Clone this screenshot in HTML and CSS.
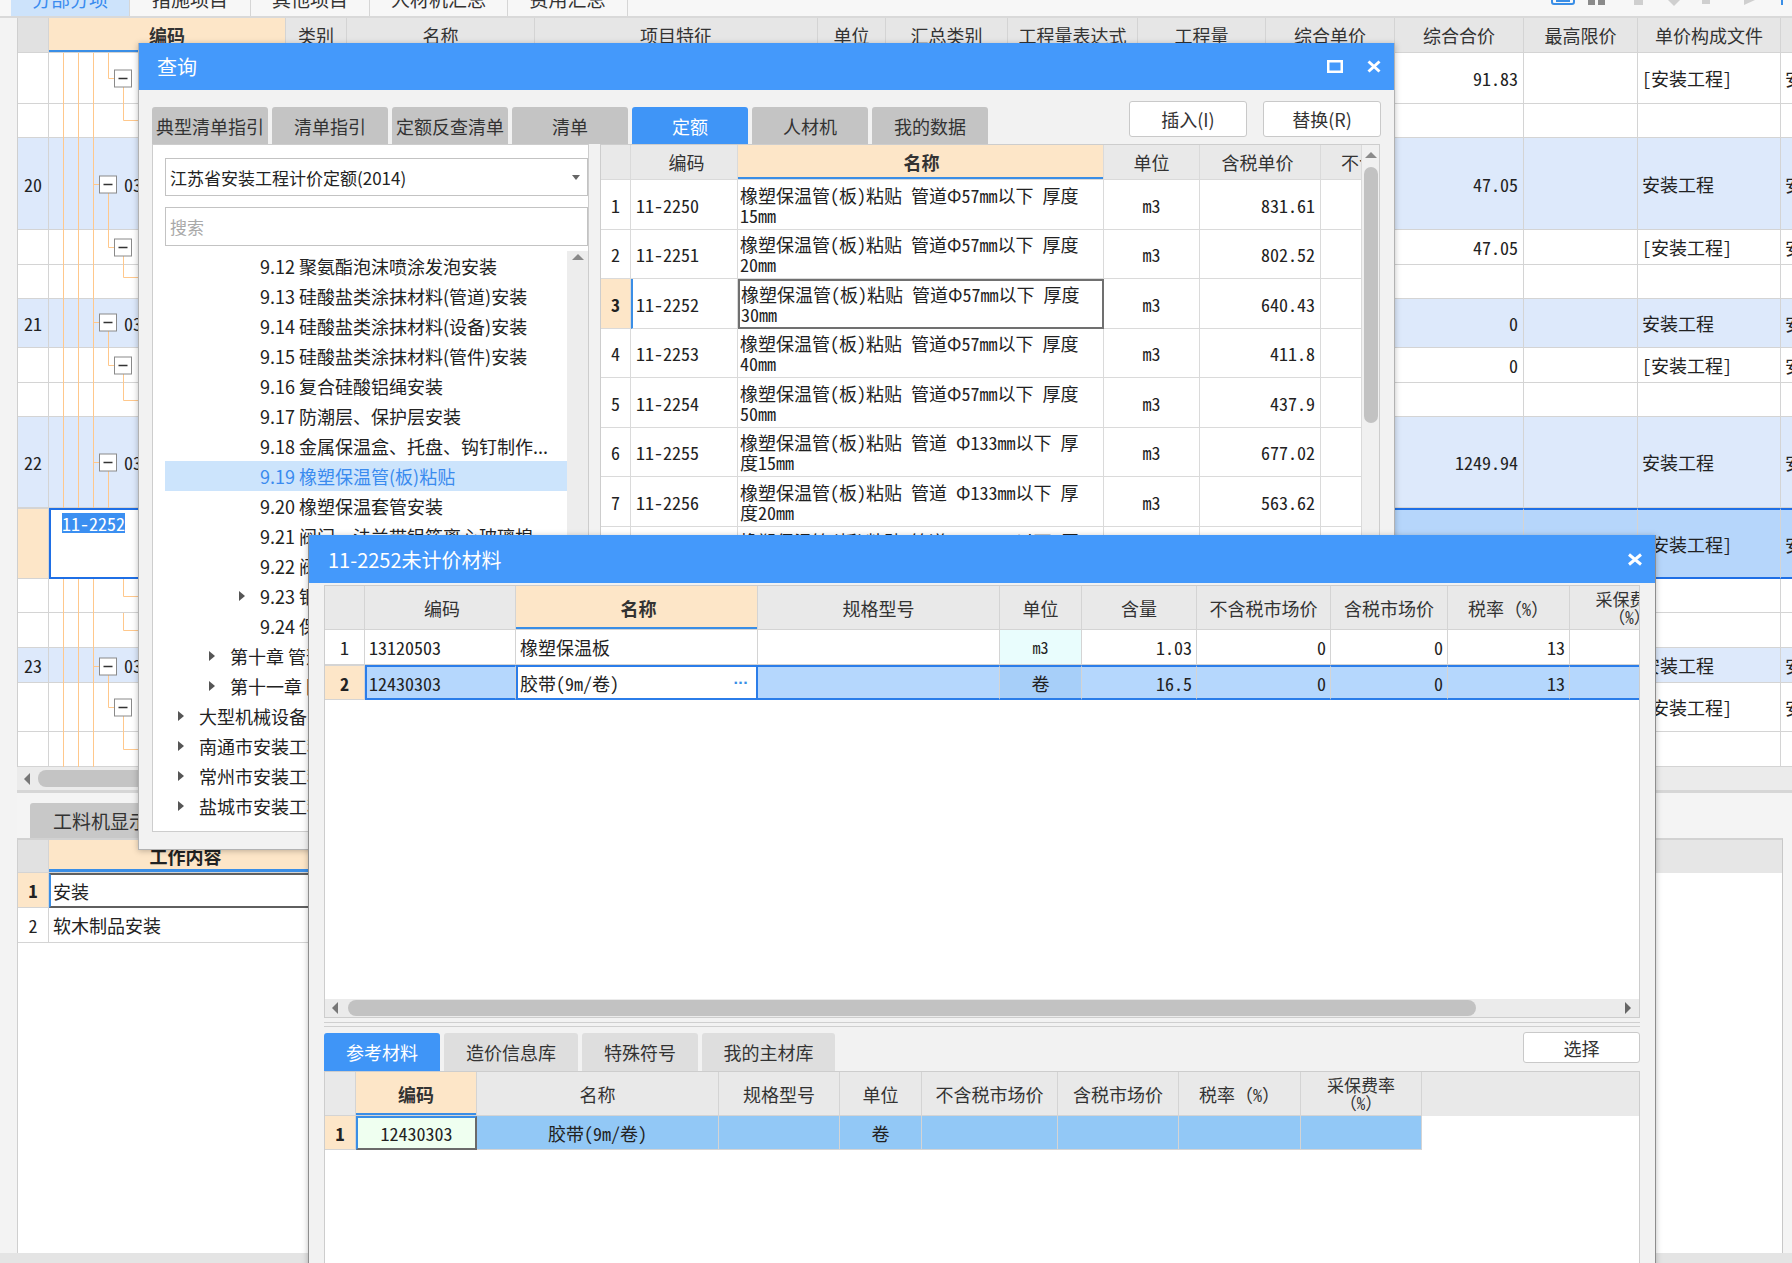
FILE: index.html
```html
<!DOCTYPE html>
<html lang="zh-CN">
<head>
<meta charset="utf-8">
<title>查询</title>
<link rel="stylesheet" href="styles.css">
</head>
<body>
<div class="app">
  <div class="toptabs">
    <div class="ttab t1 sel">分部分项</div>
    <div class="ttab t2">措施项目</div>
    <div class="ttab t3">其他项目</div>
    <div class="ttab t4">人材机汇总</div>
    <div class="ttab t5">费用汇总</div>
    <svg class="ttools" width="252" height="34" viewBox="0 0 252 34">
      <rect x="12" y="8" width="22" height="14" rx="2" fill="none" stroke="#3a8ee6" stroke-width="2"/>
      <path d="M16 19h14" stroke="#3a8ee6" stroke-width="2"/>
      <rect x="48" y="12" width="7" height="11" fill="#8a8a8a"/>
      <rect x="58" y="15" width="7" height="8" fill="#8a8a8a"/>
      <rect x="94" y="12" width="9" height="11" fill="#cfcfcf"/>
      <path d="M126 16h16l-8 8z" fill="#cfcfcf"/>
      <rect x="162" y="12" width="8" height="10" fill="#cfcfcf"/>
      <path d="M204 12l11 6-11 5z" fill="#cfcfcf"/>
      <rect x="241" y="8" width="2" height="15" fill="#3a8ee6"/>
    </svg>
  </div>

  <div class="main">
    <div class="lstrip"></div>
    <div class="work">
      <div class="bgrid">
        <div class="brow bhead">
          <div class="bc b0"></div>
          <div class="bc b1 act">编码</div>
          <div class="bc b2">类别</div>
          <div class="bc b3">名称</div>
          <div class="bc b4">项目特征</div>
          <div class="bc b5">单位</div>
          <div class="bc b6">汇总类别</div>
          <div class="bc b7">工程量表达式</div>
          <div class="bc b8">工程量</div>
          <div class="bc b9">综合单价</div>
          <div class="bc b10">综合合价</div>
          <div class="bc b11">最高限价</div>
          <div class="bc b12">单价构成文件</div>
          <div class="bc b13">取费专业</div>
        </div>
        <div class="bbody">
          <svg class="tree" width="237" height="714" viewBox="0 0 237 714">
            <path fill="none" stroke="#ffc88c" stroke-width="1" d="M14.5 0V455M29.5 0V455M44.5 0V455M14.5 526V714M29.5 526V714M44.5 526V714M59.5 0V25.5H65M74.5 34V67.5H89M44.5 131.5H50M59.5 140V194.5H65M74.5 203V224.5H89M44.5 269.5H50M59.5 278V312.5H65M74.5 321V347.5H89M44.5 409.5H50M59.5 418V455M74.5 526V543.5H89M74.5 560V577.5H89M44.5 613.5H50M59.5 622V654.5H65M74.5 663V696.5H89"/>
            <g fill="#fff" stroke="#8a8a8a" stroke-width="1">
              <rect x="65.5" y="17" width="17" height="17"/>
              <rect x="50.5" y="123" width="17" height="17"/>
              <rect x="65.5" y="186" width="17" height="17"/>
              <rect x="50.5" y="261" width="17" height="17"/>
              <rect x="65.5" y="304" width="17" height="17"/>
              <rect x="50.5" y="401" width="17" height="17"/>
              <rect x="50.5" y="605" width="17" height="17"/>
              <rect x="65.5" y="646" width="17" height="17"/>
            </g>
            <path stroke="#333" stroke-width="1.6" d="M69.5 25.5h9M54.5 131.5h9M69.5 194.5h9M54.5 269.5h9M69.5 312.5h9M54.5 409.5h9M54.5 613.5h9M69.5 654.5h9"/>
          </svg>

          <div class="brow h51">
            <div class="bc b0"></div><div class="bc b1"></div><div class="bc b2"></div><div class="bc b3"></div><div class="bc b4"></div><div class="bc b5"></div><div class="bc b6"></div><div class="bc b7"></div><div class="bc b8"></div><div class="bc b9"></div>
            <div class="bc b10">91.83</div><div class="bc b11"></div><div class="bc b12">[安装工程]</div><div class="bc b13">安装工程</div>
          </div>
          <div class="brow h34">
            <div class="bc b0"></div><div class="bc b1"></div><div class="bc b2"></div><div class="bc b3"></div><div class="bc b4"></div><div class="bc b5"></div><div class="bc b6"></div><div class="bc b7"></div><div class="bc b8"></div><div class="bc b9"></div>
            <div class="bc b10"></div><div class="bc b11"></div><div class="bc b12"></div><div class="bc b13"></div>
          </div>
          <div class="brow h92 hl">
            <div class="bc b0">20</div><div class="bc b1 code">030</div><div class="bc b2"></div><div class="bc b3"></div><div class="bc b4"></div><div class="bc b5"></div><div class="bc b6"></div><div class="bc b7"></div><div class="bc b8"></div><div class="bc b9"></div>
            <div class="bc b10">47.05</div><div class="bc b11"></div><div class="bc b12">安装工程</div><div class="bc b13">安装工程</div>
          </div>
          <div class="brow h35">
            <div class="bc b0"></div><div class="bc b1"></div><div class="bc b2"></div><div class="bc b3"></div><div class="bc b4"></div><div class="bc b5"></div><div class="bc b6"></div><div class="bc b7"></div><div class="bc b8"></div><div class="bc b9"></div>
            <div class="bc b10">47.05</div><div class="bc b11"></div><div class="bc b12">[安装工程]</div><div class="bc b13">安装工程</div>
          </div>
          <div class="brow h34">
            <div class="bc b0"></div><div class="bc b1"></div><div class="bc b2"></div><div class="bc b3"></div><div class="bc b4"></div><div class="bc b5"></div><div class="bc b6"></div><div class="bc b7"></div><div class="bc b8"></div><div class="bc b9"></div>
            <div class="bc b10"></div><div class="bc b11"></div><div class="bc b12"></div><div class="bc b13"></div>
          </div>
          <div class="brow h49 hl">
            <div class="bc b0">21</div><div class="bc b1 code">030</div><div class="bc b2"></div><div class="bc b3"></div><div class="bc b4"></div><div class="bc b5"></div><div class="bc b6"></div><div class="bc b7"></div><div class="bc b8"></div><div class="bc b9"></div>
            <div class="bc b10">0</div><div class="bc b11"></div><div class="bc b12">安装工程</div><div class="bc b13">安装工程</div>
          </div>
          <div class="brow h35">
            <div class="bc b0"></div><div class="bc b1"></div><div class="bc b2"></div><div class="bc b3"></div><div class="bc b4"></div><div class="bc b5"></div><div class="bc b6"></div><div class="bc b7"></div><div class="bc b8"></div><div class="bc b9"></div>
            <div class="bc b10">0</div><div class="bc b11"></div><div class="bc b12">[安装工程]</div><div class="bc b13">安装工程</div>
          </div>
          <div class="brow h34">
            <div class="bc b0"></div><div class="bc b1"></div><div class="bc b2"></div><div class="bc b3"></div><div class="bc b4"></div><div class="bc b5"></div><div class="bc b6"></div><div class="bc b7"></div><div class="bc b8"></div><div class="bc b9"></div>
            <div class="bc b10"></div><div class="bc b11"></div><div class="bc b12"></div><div class="bc b13"></div>
          </div>
          <div class="brow h91 hl">
            <div class="bc b0">22</div><div class="bc b1 code">030</div><div class="bc b2"></div><div class="bc b3"></div><div class="bc b4"></div><div class="bc b5"></div><div class="bc b6"></div><div class="bc b7"></div><div class="bc b8"></div><div class="bc b9"></div>
            <div class="bc b10">1249.94</div><div class="bc b11"></div><div class="bc b12">安装工程</div><div class="bc b13">安装工程</div>
          </div>
          <div class="brow h71 selrow">
            <div class="bc b0 rn"></div><div class="bc b1 edit"><span class="seltext">11-2252</span></div><div class="bc b2"></div><div class="bc b3"></div><div class="bc b4"></div><div class="bc b5"></div><div class="bc b6"></div><div class="bc b7"></div><div class="bc b8"></div><div class="bc b9"></div>
            <div class="bc b10"></div><div class="bc b11"></div><div class="bc b12">[安装工程]</div><div class="bc b13">安装工程</div>
          </div>
          <div class="brow h34">
            <div class="bc b0"></div><div class="bc b1"></div><div class="bc b2"></div><div class="bc b3"></div><div class="bc b4"></div><div class="bc b5"></div><div class="bc b6"></div><div class="bc b7"></div><div class="bc b8"></div><div class="bc b9"></div>
            <div class="bc b10"></div><div class="bc b11"></div><div class="bc b12"></div><div class="bc b13"></div>
          </div>
          <div class="brow h35">
            <div class="bc b0"></div><div class="bc b1"></div><div class="bc b2"></div><div class="bc b3"></div><div class="bc b4"></div><div class="bc b5"></div><div class="bc b6"></div><div class="bc b7"></div><div class="bc b8"></div><div class="bc b9"></div>
            <div class="bc b10"></div><div class="bc b11"></div><div class="bc b12"></div><div class="bc b13"></div>
          </div>
          <div class="brow h35 hl">
            <div class="bc b0">23</div><div class="bc b1 code">030</div><div class="bc b2"></div><div class="bc b3"></div><div class="bc b4"></div><div class="bc b5"></div><div class="bc b6"></div><div class="bc b7"></div><div class="bc b8"></div><div class="bc b9"></div>
            <div class="bc b10"></div><div class="bc b11"></div><div class="bc b12">安装工程</div><div class="bc b13">安装工程</div>
          </div>
          <div class="brow h49">
            <div class="bc b0"></div><div class="bc b1"></div><div class="bc b2"></div><div class="bc b3"></div><div class="bc b4"></div><div class="bc b5"></div><div class="bc b6"></div><div class="bc b7"></div><div class="bc b8"></div><div class="bc b9"></div>
            <div class="bc b10"></div><div class="bc b11"></div><div class="bc b12">[安装工程]</div><div class="bc b13">安装工程</div>
          </div>
          <div class="brow h35">
            <div class="bc b0"></div><div class="bc b1"></div><div class="bc b2"></div><div class="bc b3"></div><div class="bc b4"></div><div class="bc b5"></div><div class="bc b6"></div><div class="bc b7"></div><div class="bc b8"></div><div class="bc b9"></div>
            <div class="bc b10"></div><div class="bc b11"></div><div class="bc b12"></div><div class="bc b13"></div>
          </div>
        </div>
      </div>
      <div class="bscroll"><i class="larr"></i><span class="bthumb"></span></div>
      <div class="lower">
        <div class="ltabs"><div class="ltab">工料机显示</div></div>
        <div class="lgrid">
          <div class="lrow lhead">
            <div class="lc l0"></div><div class="lc l1 act">工作内容</div>
          </div>
          <div class="lrow">
            <div class="lc l0 rn">1</div><div class="lc l1 focus">安装</div>
          </div>
          <div class="lrow">
            <div class="lc l0">2</div><div class="lc l1">软木制品安装</div>
          </div>
        </div>
      </div>
    </div>
  </div>
  <div class="bottombar"></div>

  <!-- 查询 dialog -->
  <div class="dlg dlg1">
    <div class="dtitle">
      <span>查询</span>
      <span class="dicons">
        <svg width="16" height="13" viewBox="0 0 16 13"><rect x="1.25" y="1.25" width="13.5" height="10.5" fill="none" stroke="#fff" stroke-width="2.5"/></svg>
        <svg width="14" height="13" viewBox="0 0 14 13"><path d="M1.5 1.5l11 10M12.5 1.5l-11 10" stroke="#fff" stroke-width="3"/></svg>
      </span>
    </div>
    <div class="d1body">
      <div class="d1top">
        <div class="tab">典型清单指引</div>
        <div class="tab">清单指引</div>
        <div class="tab">定额反查清单</div>
        <div class="tab">清单</div>
        <div class="tab on">定额</div>
        <div class="tab">人材机</div>
        <div class="tab">我的数据</div>
        <div class="btns"><div class="btn">插入(I)</div><div class="btn">替换(R)</div></div>
      </div>
      <div class="d1main">
        <div class="lpanel">
          <div class="combo"><span>江苏省安装工程计价定额(2014)</span><i class="caret"></i></div>
          <div class="search">搜索</div>
          <div class="treewrap">
            <div class="tlist">
              <div class="ti l3"><i class="ar"></i><span>9.12 聚氨酯泡沫喷涂发泡安装</span></div>
              <div class="ti l3"><i class="ar"></i><span>9.13 硅酸盐类涂抹材料(管道)安装</span></div>
              <div class="ti l3"><i class="ar"></i><span>9.14 硅酸盐类涂抹材料(设备)安装</span></div>
              <div class="ti l3"><i class="ar"></i><span>9.15 硅酸盐类涂抹材料(管件)安装</span></div>
              <div class="ti l3"><i class="ar"></i><span>9.16 复合硅酸铝绳安装</span></div>
              <div class="ti l3"><i class="ar"></i><span>9.17 防潮层、保护层安装</span></div>
              <div class="ti l3"><i class="ar"></i><span>9.18 金属保温盒、托盘、钩钉制作...</span></div>
              <div class="ti l3 sel"><i class="ar"></i><span>9.19 橡塑保温管(板)粘贴</span></div>
              <div class="ti l3"><i class="ar"></i><span>9.20 橡塑保温套管安装</span></div>
              <div class="ti l3"><i class="ar"></i><span>9.21 阀门、法兰带铝箔离心玻璃棉...</span></div>
              <div class="ti l3"><i class="ar"></i><span>9.22 阀门、法兰保温安装</span></div>
              <div class="ti l3"><i class="ar r"></i><span>9.23 钢结构保温</span></div>
              <div class="ti l3"><i class="ar"></i><span>9.24 保温层安装</span></div>
              <div class="ti l2"><i class="ar r"></i><span>第十章 管道防腐</span></div>
              <div class="ti l2"><i class="ar r"></i><span>第十一章 附录</span></div>
              <div class="ti l1"><i class="ar r"></i><span>大型机械设备台班</span></div>
              <div class="ti l1"><i class="ar r"></i><span>南通市安装工程</span></div>
              <div class="ti l1"><i class="ar r"></i><span>常州市安装工程</span></div>
              <div class="ti l1"><i class="ar r"></i><span>盐城市安装工程</span></div>
            </div>
            <div class="vsb"><i class="uparr"></i></div>
          </div>
        </div>
        <div class="qgrid">
          <div class="qtable mono">
            <div class="qrow qhead">
              <div class="qc q0"></div><div class="qc q1">编码</div><div class="qc q2 act">名称</div><div class="qc q3">单位</div><div class="qc q4">含税单价</div><div class="qc q5 cut">不含税单价</div>
            </div>
            <div class="qrow r50">
              <div class="qc q0">1</div><div class="qc q1">11-2250</div><div class="qc q2">橡塑保温管(板)粘贴 管道Φ57mm以下 厚度<br>15mm</div><div class="qc q3">m3</div><div class="qc q4">831.61</div><div class="qc q5"></div>
            </div>
            <div class="qrow r49">
              <div class="qc q0">2</div><div class="qc q1">11-2251</div><div class="qc q2">橡塑保温管(板)粘贴 管道Φ57mm以下 厚度<br>20mm</div><div class="qc q3">m3</div><div class="qc q4">802.52</div><div class="qc q5"></div>
            </div>
            <div class="qrow r50 qsel">
              <div class="qc q0">3</div><div class="qc q1">11-2252</div><div class="qc q2">橡塑保温管(板)粘贴 管道Φ57mm以下 厚度<br>30mm</div><div class="qc q3">m3</div><div class="qc q4">640.43</div><div class="qc q5"></div>
            </div>
            <div class="qrow r49">
              <div class="qc q0">4</div><div class="qc q1">11-2253</div><div class="qc q2">橡塑保温管(板)粘贴 管道Φ57mm以下 厚度<br>40mm</div><div class="qc q3">m3</div><div class="qc q4">411.8</div><div class="qc q5"></div>
            </div>
            <div class="qrow r50">
              <div class="qc q0">5</div><div class="qc q1">11-2254</div><div class="qc q2">橡塑保温管(板)粘贴 管道Φ57mm以下 厚度<br>50mm</div><div class="qc q3">m3</div><div class="qc q4">437.9</div><div class="qc q5"></div>
            </div>
            <div class="qrow r49">
              <div class="qc q0">6</div><div class="qc q1">11-2255</div><div class="qc q2">橡塑保温管(板)粘贴 管道 Φ133mm以下 厚<br>度15mm</div><div class="qc q3">m3</div><div class="qc q4">677.02</div><div class="qc q5"></div>
            </div>
            <div class="qrow r50">
              <div class="qc q0">7</div><div class="qc q1">11-2256</div><div class="qc q2">橡塑保温管(板)粘贴 管道 Φ133mm以下 厚<br>度20mm</div><div class="qc q3">m3</div><div class="qc q4">563.62</div><div class="qc q5"></div>
            </div>
            <div class="qrow r49">
              <div class="qc q0">8</div><div class="qc q1">11-2257</div><div class="qc q2">橡塑保温管(板)粘贴 管道 Φ133mm以下 厚<br>度30mm</div><div class="qc q3">m3</div><div class="qc q4">446.6</div><div class="qc q5"></div>
            </div>
          </div>
          <div class="vsb2"><i class="uparr"></i><span class="vthumb"></span></div>
        </div>
      </div>
    </div>
  </div>

  <!-- 未计价材料 dialog -->
  <div class="dlg dlg2">
    <div class="dtitle t2">
      <span>11-2252未计价材料</span>
      <span class="dicons">
        <svg width="16" height="13" viewBox="0 0 16 13"><path d="M2 1.5l12 10M14 1.5l-12 10" stroke="#fff" stroke-width="3"/></svg>
      </span>
    </div>
    <div class="d2body">
      <div class="ugrid mono">
        <div class="urow uhead">
          <div class="uc u0"></div><div class="uc u1">编码</div><div class="uc u2 act">名称</div><div class="uc u3">规格型号</div><div class="uc u4">单位</div><div class="uc u5">含量</div><div class="uc u6">不含税市场价</div><div class="uc u7">含税市场价</div><div class="uc u8">税率（%）</div><div class="uc u9 two">采保费率<br>（%）</div>
        </div>
        <div class="urow">
          <div class="uc u0">1</div><div class="uc u1">13120503</div><div class="uc u2">橡塑保温板</div><div class="uc u3"></div><div class="uc u4 cyan">m3</div><div class="uc u5 num">1.03</div><div class="uc u6 num">0</div><div class="uc u7 num">0</div><div class="uc u8 num">13</div><div class="uc u9"></div>
        </div>
        <div class="urow usel">
          <div class="uc u0">2</div><div class="uc u1">12430303</div><div class="uc u2 editc">胶带(9m/卷)<span class="dots">···</span></div><div class="uc u3"></div><div class="uc u4 deep">卷</div><div class="uc u5 num">16.5</div><div class="uc u6 num">0</div><div class="uc u7 num">0</div><div class="uc u8 num">13</div><div class="uc u9"></div>
        </div>
        <div class="ufill"></div>
        <div class="hsb"><i class="larr"></i><span class="hthumb"></span><i class="rarr"></i></div>
      </div>
      <div class="sep"></div>
      <div class="d2tabs">
        <div class="t2b on w116">参考材料</div>
        <div class="t2b w134">造价信息库</div>
        <div class="t2b w116">特殊符号</div>
        <div class="t2b w133">我的主材库</div>
        <div class="selbtn">选择</div>
      </div>
      <div class="wgrid mono">
        <div class="wrow whead">
          <div class="wc w0"></div><div class="wc w1 act">编码</div><div class="wc w2">名称</div><div class="wc w3">规格型号</div><div class="wc w4">单位</div><div class="wc w5">不含税市场价</div><div class="wc w6">含税市场价</div><div class="wc w7">税率（%）</div><div class="wc w8 two">采保费率<br>（%）</div>
        </div>
        <div class="wrow wsel">
          <div class="wc w0">1</div><div class="wc w1 fcell">12430303</div><div class="wc w2">胶带(9m/卷)</div><div class="wc w3"></div><div class="wc w4">卷</div><div class="wc w5"></div><div class="wc w6"></div><div class="wc w7"></div><div class="wc w8"></div>
        </div>
      </div>
    </div>
  </div>
</div>
</body>
</html>
```

FILE: styles.css
```css
* { box-sizing: border-box; margin: 0; padding: 0; }
html, body { width: 1792px; height: 1263px; overflow: hidden; background: #fff; }
body { font-family: "Noto Sans CJK SC", "Noto Sans", sans-serif; color: #222; font-size: 18px; }
.mono, .bbody, .lgrid .lrow { font-family: "Noto Sans Mono CJK SC", "Noto Sans CJK SC", "DejaVu Sans Mono", monospace; }

.app { position: relative; width: 1792px; height: 1263px; overflow: hidden; background: #f4f4f4; }

/* top tabs (cut off at top) */
.toptabs { display: flex; margin-top: -18px; height: 36px; padding-left: 11px; background: #f7f7f7; border-bottom: 2px solid #d9d9d9; }
.ttab { height: 34px; line-height: 34px; text-align: center; font-size: 19px; color: #333; border-right: 1px solid #d6d6d6; flex: none; }
.ttab.t1 { width: 119px; }
.ttab.t2 { width: 121px; }
.ttab.t3 { width: 119px; }
.ttab.t4 { width: 138px; }
.ttab.t5 { width: 120px; }
.ttab.sel { background: #cde3fb; color: #3a8bef; }
.ttools { margin-left: auto; flex: none; }

.main { display: flex; height: 1235px; }
.lstrip { width: 17px; flex: none; background: #f3f3f3; }
.work { flex: 1; display: flex; flex-direction: column; overflow: hidden; background: #fff; min-width: 0; }

/* background grid */
.bgrid { border-left: 1px solid #cfcfcf; flex: none; }
.brow { display: flex; }
.bc { flex: none; height: 100%; border-right: 1px solid #d4d4d4; border-bottom: 1px solid #d4d4d4; display: flex; align-items: center; white-space: nowrap; overflow: hidden; font-size: 18px; }
.bhead { height: 35px; background: #e6e6e6; }
.bhead .bc { justify-content: center; color: #333; }
.bhead .b0 { background: #e1e1e1; }
.bhead .act { background: #fde6c8; font-weight: bold; box-shadow: inset 0 -2px 0 #3a8ee6; }
.b0 { width: 31px; justify-content: center; }
.b1 { width: 237px; }
.b2 { width: 61px; }
.b3 { width: 188px; }
.b4 { width: 283px; }
.b5 { width: 68px; }
.b6 { width: 122px; }
.b7 { width: 130px; }
.b8 { width: 128px; }
.b9 { width: 129px; }
.b10 { width: 129px; justify-content: flex-end; padding-right: 5px; }
.b11 { width: 114px; }
.b12 { width: 143px; padding-left: 4px; }
.b13 { width: 100px; padding-left: 4px; }
.bhead .b10, .bhead .b12, .bhead .b13 { padding: 0; justify-content: center; }

.bbody { position: relative; }
.tree { position: absolute; left: 31px; top: 0; pointer-events: none; }
.h34 { height: 34px; }
.h35 { height: 35px; }
.h49 { height: 49px; }
.h51 { height: 51px; }
.h71 { height: 71px; }
.h91 { height: 91px; }
.h92 { height: 92px; }
.hl { background: #dde9fb; }
.b1.code { padding-left: 75px; }
.selrow { background: #b6d6fb; }
.selrow .bc { border-top: 2px solid #1f6fe5; border-bottom: 2px solid #1f6fe5; }
.selrow .rn { background: #fde6c8; border-top: 1px solid #d4d4d4; border-bottom: 1px solid #d4d4d4; }
.selrow .edit { background: #fff; border-left: 2px solid #1f6fe5; align-items: flex-start; padding: 3px 0 0 11px; }
.seltext { background: #3b8ff1; color: #fff; line-height: 20px; }

.bscroll { height: 26px; flex: none; background: #ebebeb; border-bottom: 3px solid #d6d6d6; display: flex; align-items: center; padding-left: 7px; }
.larr { width: 0; height: 0; border-right: 6px solid #777; border-top: 6px solid transparent; border-bottom: 6px solid transparent; flex: none; }
.rarr { width: 0; height: 0; border-left: 6px solid #666; border-top: 6px solid transparent; border-bottom: 6px solid transparent; flex: none; }
.bthumb { margin-left: 8px; width: 600px; height: 17px; border-radius: 8px; background: #c4c4c4; }

.lower { flex: 1; display: flex; flex-direction: column; background: #f4f4f4; }
.ltabs { height: 45px; padding: 10px 0 0 13px; display: flex; flex: none; }
.ltab { width: 160px; height: 35px; background: #c8c8c8; border-radius: 3px 3px 0 0; font-size: 19px; line-height: 35px; padding-left: 23px; color: #333; }
.lgrid { width: 1766px; flex: 1; background: #fff; border-top: 2px solid #d2d2d2; border-left: 1px solid #cfcfcf; border-right: 1px solid #c8c8c8; }
.lrow { display: flex; height: 35px; }
.lhead { height: 33px; background: #e6e6e6; font-family: "Noto Sans CJK SC", sans-serif; }
.lc { height: 100%; display: flex; align-items: center; border-right: 1px solid #d4d4d4; border-bottom: 1px solid #d4d4d4; font-size: 18px; white-space: nowrap; }
.l0 { width: 31px; justify-content: center; }
.l1 { width: 600px; padding-left: 4px; }
.lhead .l0 { background: #e1e1e1; }
.lhead .act { background: #fde6c8; font-weight: bold; justify-content: center; padding: 0 326px 0 0; box-shadow: inset 0 -3px 0 #3a8ee6; }
.lc.rn { background: #fde6c8; font-weight: bold; }
.lc.focus { border: 2px solid #5f5f5f; border-left-color: #3a8ee6; padding-left: 2px; }

.bottombar { height: 10px; background: #e4e4e4; }

/* dialogs */
.dlg { position: absolute; display: flex; flex-direction: column; background: #f2f2f2; box-shadow: 0 1px 6px rgba(0, 0, 0, 0.25); }
.dtitle { flex: none; height: 47px; background: #4499fb; color: #fff; font-size: 20px; display: flex; align-items: center; padding: 0 13px 0 18px; }
.dicons { margin-left: auto; display: flex; align-items: center; gap: 24px; }
.dlg1 { left: 138px; top: 43px; width: 1257px; height: 807px; border: 1px solid #b2b2b2; border-top: none; }
.d1body { flex: 1; display: flex; flex-direction: column; padding: 11px 13px 17px 13px; min-height: 0; }
.d1top { flex: none; height: 43px; display: flex; align-items: flex-end; gap: 4px; }
.tab { width: 116px; height: 37px; flex: none; background: #c4c4c4; border-radius: 3px 3px 0 0; display: flex; align-items: center; justify-content: center; font-size: 18px; color: #333; }
.tab.on { background: #3f95f7; color: #fff; }
.btns { margin-left: auto; align-self: flex-start; display: flex; gap: 16px; }
.btn { width: 118px; height: 36px; background: #fff; border: 1px solid #c9c9c9; border-radius: 3px; display: flex; align-items: center; justify-content: center; font-size: 18px; color: #333; }

.d1main { flex: 1; display: flex; min-height: 0; }
.lpanel { width: 437px; flex: none; margin-right: 11px; background: #fff; border: 1px solid #cdcdcd; padding: 13px 0 0 12px; display: flex; flex-direction: column; }
.combo { flex: none; height: 38px; border: 1px solid #c3c3c3; display: flex; align-items: center; padding-left: 4px; font-size: 17px; color: #222; }
.caret { margin-left: auto; margin-right: 7px; width: 0; height: 0; border-top: 5px solid #666; border-left: 4px solid transparent; border-right: 4px solid transparent; }
.search { flex: none; height: 39px; margin-top: 11px; border: 1px solid #c3c3c3; padding-left: 4px; display: flex; align-items: center; font-size: 17px; color: #a9a9a9; }
.treewrap { flex: 1; display: flex; margin-top: 5px; min-height: 0; overflow: hidden; }
.tlist { flex: 1; min-width: 0; }
.ti { height: 30px; display: flex; align-items: center; font-size: 18px; color: #222; white-space: nowrap; overflow: hidden; }
.ti.l3 { padding-left: 74px; }
.ti.l2 { padding-left: 44px; }
.ti.l1 { padding-left: 13px; }
.ti.sel { background: #cce4fc; color: #3a8bef; }
.ar { width: 21px; flex: none; display: flex; align-items: center; }
.ar.r::before { content: ""; width: 0; height: 0; border-left: 6px solid #555; border-top: 5px solid transparent; border-bottom: 5px solid transparent; }
.vsb { width: 21px; flex: none; background: #ededed; display: flex; justify-content: center; padding-top: 3px; }
.uparr { width: 0; height: 0; border-bottom: 6px solid #8a8a8a; border-left: 6px solid transparent; border-right: 6px solid transparent; }

.qgrid { width: 780px; flex: none; background: #fff; border: 1px solid #cdcdcd; display: flex; overflow: hidden; }
.qtable { width: 761px; flex: none; }
.qrow { display: flex; }
.qc { flex: none; height: 100%; border-right: 1px solid #dadada; border-bottom: 1px solid #dadada; display: flex; align-items: center; font-size: 18px; white-space: nowrap; overflow: hidden; }
.qhead { height: 35px; background: #e9e9e9; font-family: "Noto Sans CJK SC", sans-serif; }
.qhead .qc { justify-content: center; color: #333; }
.qhead .act { background: #fde6c8; font-weight: bold; box-shadow: inset 0 -2px 0 #3a8ee6; }
.qhead .cut { justify-content: flex-start; padding-left: 20px; }
.r50 { height: 50px; }
.r49 { height: 49px; }
.q0 { width: 30px; justify-content: center; }
.q1 { width: 107px; padding-left: 5px; }
.q2 { width: 366px; padding-left: 2px; line-height: 20px; white-space: normal; }
.q3 { width: 96px; justify-content: center; }
.q4 { width: 121px; justify-content: flex-end; padding-right: 5px; }
.q5 { width: 41px; }
.qsel .q0 { background: #fde6c8; font-weight: bold; }
.qsel .q1 { border-left: 2px solid #3a8ee6; padding-left: 3px; }
.qsel .q2 { border: 2px solid #707070; padding-left: 1px; }
.vsb2 { width: 17px; flex: none; background: #f0f0f0; display: flex; flex-direction: column; align-items: center; padding-top: 7px; }
.vthumb { margin-top: 9px; width: 14px; height: 256px; border-radius: 7px; background: #c2c2c2; }

.dlg2 { left: 308px; top: 535px; width: 1348px; height: 740px; border: 1px solid #8e8e8e; border-top: none; }
.dtitle.t2 { height: 48px; padding: 0 12px 0 19px; }
.d2body { flex: 1; display: flex; flex-direction: column; padding: 2px 15px 0 15px; min-height: 0; }
.ugrid { flex: none; height: 433px; border: 1px solid #cdcdcd; background: #fff; display: flex; flex-direction: column; overflow: hidden; }
.urow { display: flex; height: 35px; flex: none; }
.uhead { height: 44px; background: #e9e9e9; }
.uc, .wc { flex: none; height: 100%; border-right: 1px solid #d4d4d4; border-bottom: 1px solid #d4d4d4; display: flex; align-items: center; font-size: 18px; white-space: nowrap; overflow: hidden; }
.uhead .uc, .whead .wc { justify-content: center; color: #333; }
.uhead .act, .whead .act { background: #fde6c8; font-weight: bold; box-shadow: inset 0 -2px 0 #3a8ee6; }
.two { white-space: normal; text-align: center; line-height: 18px; font-size: 17px; }
.u0 { width: 40px; justify-content: center; }
.u1 { width: 151px; padding-left: 4px; }
.u2 { width: 242px; padding-left: 4px; }
.u3 { width: 242px; }
.u4 { width: 82px; justify-content: center; }
.u5 { width: 115px; }
.u6 { width: 134px; }
.u7 { width: 117px; }
.u8 { width: 122px; }
.u9 { width: 120px; }
.uc.num { justify-content: flex-end; padding-right: 4px; }
.uc.cyan { background: #e9fdfd; font-size: 16px; }
.usel { background: #b5d7fd; }
.usel .uc { border-top: 2px solid #2b7de9; border-bottom: 2px solid #2b7de9; }
.usel .u0 { background: #fde6c8; font-weight: bold; border-top: 1px solid #d4d4d4; border-bottom: 1px solid #d4d4d4; }
.usel .u1 { border-left: 2px solid #2b7de9; padding-left: 2px; }
.usel .editc { background: #fff; border: 2px solid #2b7de9; padding-left: 2px; }
.dots { margin-left: auto; margin-right: 8px; color: #3a8ee6; font-family: "DejaVu Sans", sans-serif; font-size: 13px; font-weight: bold; letter-spacing: 0; }
.usel .deep { background: #a7cff9; }
.ufill { flex: 1; }
.hsb { flex: none; height: 18px; background: #ebebeb; display: flex; align-items: center; padding: 0 8px 0 7px; }
.hthumb { margin-left: 10px; width: 1128px; height: 16px; border-radius: 8px; background: #c2c2c2; }
.hsb .rarr { margin-left: auto; }

.sep { flex: none; height: 15px; padding-top: 4px; }
.sep::before { content: ""; display: block; height: 3px; border-top: 1px solid #cfcfcf; border-bottom: 1px solid #cfcfcf; }
.d2tabs { flex: none; height: 38px; display: flex; align-items: flex-end; gap: 4px; }
.t2b { height: 38px; flex: none; background: #dedede; border-radius: 3px 3px 0 0; display: flex; align-items: center; justify-content: center; font-size: 18px; color: #333; }
.t2b.on { background: #3f95f7; color: #fff; }
.w116 { width: 116px; }
.w134 { width: 134px; }
.w133 { width: 133px; }
.selbtn { margin-left: auto; align-self: flex-start; margin-top: -1px; width: 117px; height: 31px; background: #fff; border: 1px solid #c9c9c9; border-radius: 3px; display: flex; align-items: center; justify-content: center; font-size: 18px; color: #333; }

.wgrid { flex: 1; border: 1px solid #cdcdcd; background: #fff; }
.wrow { display: flex; height: 34px; }
.whead { height: 44px; background: #e9e9e9; }
.w0 { width: 31px; justify-content: center; }
.w1 { width: 121px; justify-content: center; }
.w2 { width: 242px; justify-content: center; }
.w3 { width: 121px; justify-content: center; }
.w4 { width: 82px; justify-content: center; }
.w5 { width: 136px; }
.w6 { width: 121px; }
.w7 { width: 122px; }
.w8 { width: 121px; }
.wsel .wc { background: #92c8f6; }
.wsel .w0 { background: #fde6c8; font-weight: bold; }
.wsel .fcell { background: #effff0; border: 2px solid #6a6a6a; border-left-color: #3a8ee6; border-top-color: #3a8ee6; }
```
